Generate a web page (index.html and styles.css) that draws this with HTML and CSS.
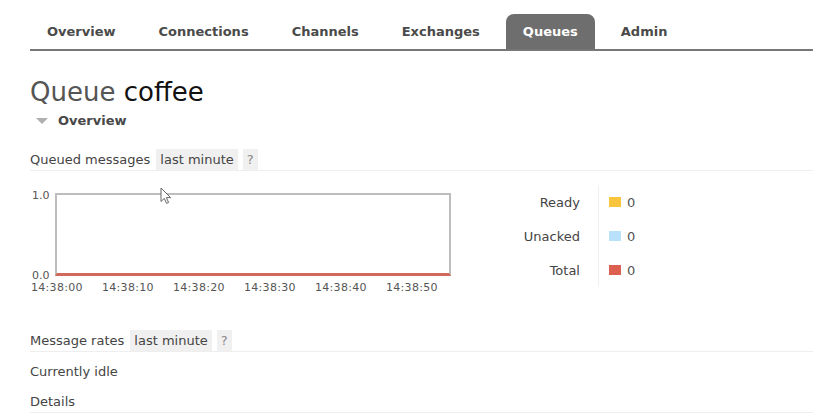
FILE: index.html
```html
<!DOCTYPE html>
<html lang="en">
<head>
  <meta charset="UTF-8">
  <title>RabbitMQ Management: Queue coffee</title>
  <link rel="stylesheet" href="styles.css">
</head>
<body>
  <div class="header">
    <ul class="tabs">
      <li><a href="#">Overview</a></li>
      <li><a href="#">Connections</a></li>
      <li><a href="#">Channels</a></li>
      <li><a href="#">Exchanges</a></li>
      <li class="selected"><a href="#">Queues</a></li>
      <li><a href="#">Admin</a></li>
    </ul>
  </div>

  <div class="main">
    <h1>Queue <b>coffee</b></h1>

    <div class="section">
      <h2><span class="arrow"></span>Overview</h2>

      <div class="hider">
        <h3>Queued messages <span class="pill">last minute</span><span class="pill help">?</span></h3>

        <div class="box">
          <div class="chart">
            <div class="plot-wrap">
              <div class="y-axis"><span>1.0</span><span>0.0</span></div>
              <div class="plot">
                <svg class="cursor" width="12" height="18" viewBox="0 0 12 18">
                  <path d="M1 1 L1 14.5 L4.3 11.4 L6.6 16.4 L8.6 15.5 L6.4 10.6 L10.6 10.6 Z" fill="#fff" stroke="#666" stroke-width="1" stroke-linejoin="round"/>
                </svg>
              </div>
            </div>
            <div class="x-axis">
              <span>14:38:00</span>
              <span>14:38:10</span>
              <span>14:38:20</span>
              <span>14:38:30</span>
              <span>14:38:40</span>
              <span>14:38:50</span>
            </div>
          </div>

          <table class="facts">
            <tr>
              <th>Ready</th>
              <td><span class="swatch ready"></span>0</td>
            </tr>
            <tr>
              <th>Unacked</th>
              <td><span class="swatch unacked"></span>0</td>
            </tr>
            <tr>
              <th>Total</th>
              <td><span class="swatch total"></span>0</td>
            </tr>
          </table>
        </div>

        <h3 class="rates">Message rates <span class="pill">last minute</span><span class="pill help">?</span></h3>
        <p class="idle">Currently idle</p>

        <h3 class="details">Details</h3>
      </div>
    </div>
  </div>
</body>
</html>
```

FILE: styles.css
```css
body {
  margin: 0;
  font-family: "DejaVu Sans", Verdana, sans-serif;
  font-size: 13px;
  color: #444;
  background: #fff;
}

/* top menu */
.tabs {
  list-style: none;
  display: flex;
  margin: 0 0 0 30px;
  padding: 14px 0 0;
  border-bottom: 2px solid #777;
}

.tabs li {
  margin-right: 9px;
}

.tabs a {
  display: block;
  padding: 0 17px;
  line-height: 35px;
  font-size: 13px;
  font-weight: bold;
  color: #4a4a4a;
  text-decoration: none;
  border-radius: 8px 8px 0 0;
}

.tabs .selected a {
  background: #6e6e6e;
  color: #fff;
}

.main {
  padding-left: 30px;
}

h1 {
  margin: 26px 0 0;
  font-size: 26px;
  line-height: 30px;
  font-weight: normal;
  color: #555;
}

h1 b {
  font-weight: normal;
  color: #111;
}

h2 {
  display: flex;
  align-items: center;
  margin: 4px 0 0;
  padding-left: 6px;
  font-size: 13px;
  line-height: 20px;
  color: #484848;
}

.arrow {
  width: 0;
  height: 0;
  border-left: 6px solid transparent;
  border-right: 6px solid transparent;
  border-top: 6px solid #b0b0b0;
  margin-right: 10px;
}

h3 {
  display: flex;
  align-items: center;
  gap: 5px;
  margin: 18px 0 0;
  font-size: 13px;
  font-weight: normal;
  line-height: 21px;
  border-bottom: 1px solid #eee;
}

.pill {
  padding: 0 4px;
  background: #f0f0f0;
  color: #444;
}

.pill.help {
  color: #888;
}

h3 .pill:first-child {
  margin-left: 1px;
}

/* chart + legend */
.box {
  display: flex;
  align-items: flex-start;
  margin-top: 14px;
}

.chart {
  width: 470px;
  margin-top: 8px;
}

.plot-wrap {
  display: flex;
}

.y-axis {
  width: 23px;
  padding-left: 2px;
  display: flex;
  flex-direction: column;
  justify-content: space-between;
  margin: -3px 0 -5px;
  font-size: 11px;
  line-height: 11px;
  color: #555;
}

.plot {
  position: relative;
  box-sizing: border-box;
  width: 396px;
  height: 83px;
  border: 2px solid #bdbdbd;
  border-bottom: 3px solid #d2675c;
}

.cursor {
  position: absolute;
  left: 103px;
  top: -8px;
}

.x-axis {
  display: flex;
  margin-top: 6px;
  padding-left: 1px;
  font-size: 11px;
  line-height: 11px;
  letter-spacing: 0.3px;
  color: #555;
}

.x-axis span {
  width: 71px;
}

.facts {
  border-collapse: collapse;
}

.facts th {
  width: 80px;
  height: 34px;
  padding: 0 18px 0 0;
  text-align: right;
  font-weight: normal;
  color: #444;
}

.facts td {
  padding: 0 0 0 10px;
  border-left: 1px solid #eee;
  color: #555;
}

.swatch {
  display: inline-block;
  width: 12px;
  height: 10px;
  margin-right: 6px;
}

.ready {
  background: #f9c53f;
}

.unacked {
  background: #bae1fb;
}

.total {
  background: #dd5f50;
}

h3.rates {
  margin-top: 37px;
}

.idle {
  margin: 11px 0 0;
  line-height: 18px;
}

h3.details {
  margin-top: 11px;
  line-height: 20px;
}
```
